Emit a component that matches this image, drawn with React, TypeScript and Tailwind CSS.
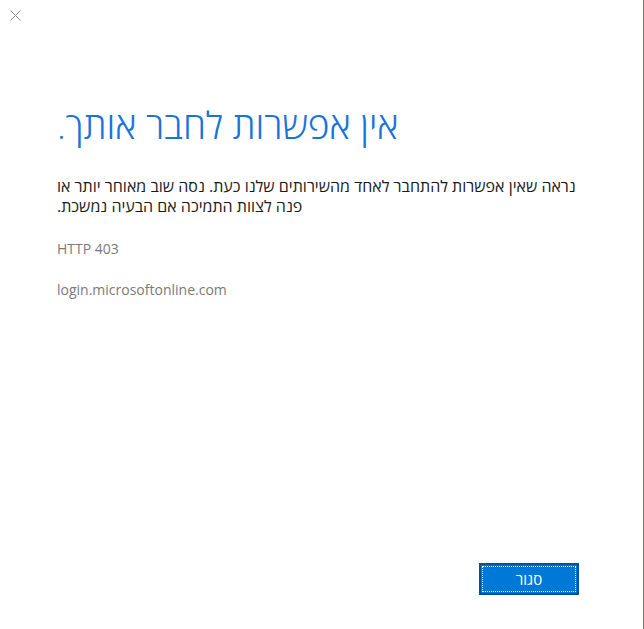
import React from "react";

const font = { fontFamily: "'Segoe UI', 'Open Sans', 'Liberation Sans', 'DejaVu Sans', sans-serif" };

function CloseIcon() {
  return (
    <svg width="11" height="11" viewBox="0 0 11 11" className="block">
      <path d="M0.5 0.5L10.5 10.5M10.5 0.5L0.5 10.5" stroke="#8a8a8a" strokeWidth="1" />
    </svg>
  );
}

export default function App() {
  return (
    <div className="flex h-[629px] w-[644px] flex-col overflow-hidden border-r border-[#9c6b3c] bg-white" style={font}>
      <div className="px-[10px] pt-[10px]">
        <button className="flex h-[11px] w-[11px] items-center justify-center">
          <CloseIcon />
        </button>
      </div>

      <div className="flex flex-1 flex-col pl-[57px] pr-[54px] pt-[83px]">
        <h1 dir="rtl" className="text-left text-[37px] font-light leading-[42px] text-[#1a73d9]">
          אין אפשרות לחבר אותך.
        </h1>
        <p dir="rtl" className="mt-[30px] text-left text-[16px] leading-[20px] text-[#1b1b1b]">
          נראה שאין אפשרות להתחבר לאחד מהשירותים שלנו כעת. נסה שוב מאוחר יותר או פנה לצוות התמיכה אם הבעיה נמשכת.
        </p>
        <p className="mt-[23px] text-[14px] leading-[20px] text-[#7a7a7a]">HTTP 403</p>
        <p className="mt-[21px] text-[14px] leading-[20px] text-[#7a7a7a]">login.microsoftonline.com</p>
      </div>

      <div className="flex justify-end pb-[34px] pr-[64px]">
        <button className="h-[32px] w-[100px] border-2 border-[#0b5192] bg-[#0078d7] p-[1px]">
          <span className="flex h-full w-full items-center justify-center border border-dotted border-white text-[15px] leading-none text-white">
            סגור
          </span>
        </button>
      </div>
    </div>
  );
}
